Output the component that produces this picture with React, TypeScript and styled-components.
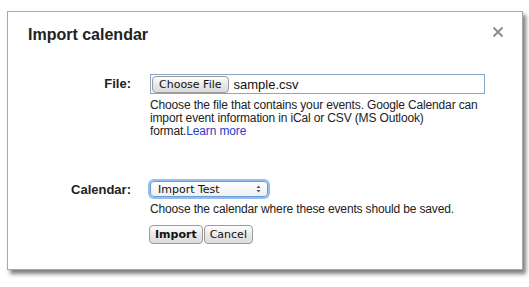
import React from "react";
import styled, { createGlobalStyle } from "styled-components";

const Global = createGlobalStyle`
  html, body { margin: 0; padding: 0; background: #fff; }
  body { font-family: Arial, "Liberation Sans", sans-serif; color: #222; }
`;

const Page = styled.div`
  width: 529px;
  height: 287px;
  padding: 11px 0 0 7px;
  box-sizing: border-box;
`;

const Dialog = styled.div`
  position: relative;
  width: 516px;
  height: 259px;
  box-sizing: border-box;
  border: 1px solid #a8a8a8;
  background: #fff;
  box-shadow: 3px 4px 4px rgba(0, 0, 0, 0.5);
  padding: 12px 0 0 0;
`;

const Title = styled.h1`
  margin: 0 0 0 20px;
  font-family: "Liberation Sans", Arial, sans-serif;
  font-size: 16px;
  font-weight: bold;
  line-height: 21px;
  color: #222;
`;

const Close = styled.button`
  position: absolute;
  top: 14px;
  right: 18px;
  border: none;
  background: none;
  padding: 0;
  width: 12px;
  height: 12px;
  cursor: pointer;
`;

const Form = styled.div`
  display: grid;
  grid-template-columns: 123px 1fr;
  column-gap: 19px;
  margin-top: 29px;
`;

const Label = styled.div<{ $top: number }>`
  text-align: right;
  font-family: "Liberation Sans", Arial, sans-serif;
  font-weight: bold;
  font-size: 13px;
  color: #222;
  padding-top: ${(p) => p.$top}px;
`;

const Field = styled.div<{ $gapBelow?: number }>`
  display: flex;
  flex-direction: column;
  align-items: flex-start;
  margin-bottom: ${(p) => p.$gapBelow ?? 0}px;
`;

const FileBox = styled.div`
  width: 335px;
  height: 20px;
  box-sizing: border-box;
  border: 1px solid #8ba6c4;
  display: flex;
  align-items: center;
  padding-left: 1px;
  gap: 5px;
`;

const MacButton = styled.button<{ $bold?: boolean }>`
  height: 17px;
  box-sizing: border-box;
  border: 1px solid #9a9a9a;
  border-radius: 4px;
  background: linear-gradient(#ffffff, #e9e9e9 50%, #dcdcdc);
  font-family: "DejaVu Sans", Verdana, sans-serif;
  font-size: 11px;
  font-weight: ${(p) => (p.$bold ? "bold" : "normal")};
  color: #111;
  padding: 0 6px;
  line-height: 15px;
  margin: 0;
`;

const FileName = styled.span`
  font-family: "Liberation Sans", Arial, sans-serif;
  font-size: 13px;
  color: #111;
`;

const Help = styled.p<{ $mt: number }>`
  margin: ${(p) => p.$mt}px 0 0 0;
  font-family: "Liberation Sans", Arial, sans-serif;
  font-size: 12px;
  line-height: 13px;
  letter-spacing: -0.15px;
  color: #222;
  width: 340px;
`;

const Link = styled.a`
  color: #2a3ccc;
  text-decoration: none;
`;

const Select = styled.div`
  width: 118px;
  height: 16px;
  box-sizing: border-box;
  border: 1px solid #6d9ad6;
  border-radius: 4px;
  box-shadow: 0 0 0 2px #94bdf0;
  background: linear-gradient(#ffffff, #eef0f4);
  display: flex;
  align-items: center;
  justify-content: space-between;
  padding: 0 6px 0 7px;
  font-family: "DejaVu Sans", Verdana, sans-serif;
  font-size: 11px;
  color: #111;
`;

const Buttons = styled.div`
  display: flex;
  margin-top: 9px;
  margin-left: -1px;
  gap: 1px;
`;

const Button = styled(MacButton)`
  height: 19px;
  padding: 0 5px;
`;

export default function App() {
  return (
    <Page>
      <Global />
      <Dialog>
        <Title>Import calendar</Title>
        <Close aria-label="Close">
          <svg width="12" height="12" viewBox="0 0 12 12">
            <path d="M1.5 1.5L10.5 10.5M10.5 1.5L1.5 10.5" stroke="#8a8a8a" strokeWidth="1.8" />
          </svg>
        </Close>
        <Form>
          <Label $top={2}>File:</Label>
          <Field $gapBelow={43}>
            <FileBox>
              <MacButton>Choose File</MacButton>
              <FileName>sample.csv</FileName>
            </FileBox>
            <Help $mt={5}>
              Choose the file that contains your events. Google Calendar can
              import event information in iCal or CSV (MS Outlook) format.
              <Link href="#">Learn more</Link>
            </Help>
          </Field>
          <Label $top={1}>Calendar:</Label>
          <Field>
            <Select>
              <span>Import Test</span>
              <svg width="5" height="8" viewBox="0 0 5 8">
                <path d="M0.5 3L2.5 0.5L4.5 3Z M0.5 5L2.5 7.5L4.5 5Z" fill="#555" />
              </svg>
            </Select>
            <Help $mt={6}>Choose the calendar where these events should be saved.</Help>
            <Buttons>
              <Button $bold>Import</Button>
              <Button>Cancel</Button>
            </Buttons>
          </Field>
        </Form>
      </Dialog>
    </Page>
  );
}
